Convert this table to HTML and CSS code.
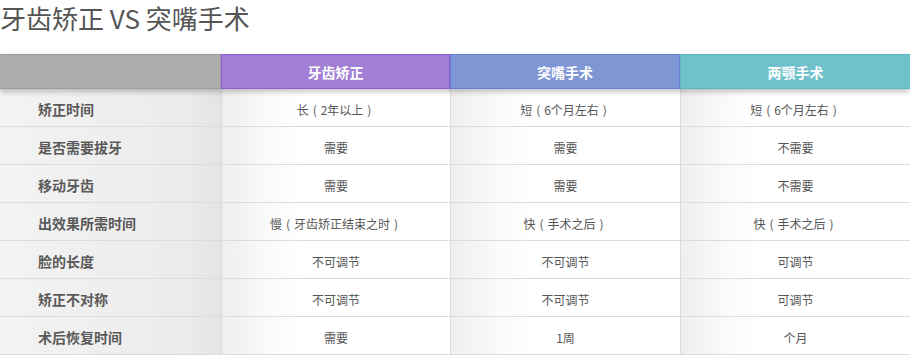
FILE: index.html
```html
<!DOCTYPE html>
<html lang="zh">
<head>
<meta charset="utf-8">
<link rel="stylesheet" href="styles.css">
</head>
<body>
<h1 class="title">牙齿矫正 VS 突嘴手术</h1>
<div class="table">
  <div class="head">
    <div class="hcell hblank"></div>
    <div class="hcell hpurple">牙齿矫正</div>
    <div class="hcell hblue">突嘴手术</div>
    <div class="hcell hteal">两颚手术</div>
  </div>
  <div class="row">
    <div class="label">矫正时间</div>
    <div class="cell">长<span class="p">(</span>2年以上<span class="p">)</span></div>
    <div class="cell">短<span class="p">(</span>6个月左右<span class="p">)</span></div>
    <div class="cell">短<span class="p">(</span>6个月左右<span class="p">)</span></div>
  </div>
  <div class="row">
    <div class="label">是否需要拔牙</div>
    <div class="cell">需要</div>
    <div class="cell">需要</div>
    <div class="cell">不需要</div>
  </div>
  <div class="row">
    <div class="label">移动牙齿</div>
    <div class="cell">需要</div>
    <div class="cell">需要</div>
    <div class="cell">不需要</div>
  </div>
  <div class="row">
    <div class="label">出效果所需时间</div>
    <div class="cell">慢<span class="p">(</span>牙齿矫正结束之时<span class="p">)</span></div>
    <div class="cell">快<span class="p">(</span>手术之后<span class="p">)</span></div>
    <div class="cell">快<span class="p">(</span>手术之后<span class="p">)</span></div>
  </div>
  <div class="row">
    <div class="label">脸的长度</div>
    <div class="cell">不可调节</div>
    <div class="cell">不可调节</div>
    <div class="cell">可调节</div>
  </div>
  <div class="row">
    <div class="label">矫正不对称</div>
    <div class="cell">不可调节</div>
    <div class="cell">不可调节</div>
    <div class="cell">可调节</div>
  </div>
  <div class="row">
    <div class="label">术后恢复时间</div>
    <div class="cell">需要</div>
    <div class="cell">1周</div>
    <div class="cell">个月</div>
  </div>
</div>
</body>
</html>
```

FILE: styles.css
```css
html, body {
  margin: 0;
  padding: 0;
  background: #fff;
  font-family: "Noto Sans CJK SC", "Noto Sans", sans-serif;
  color: #555;
}
.title {
  margin: 0;
  height: 54px;
  font-size: 26px;
  line-height: 36px;
  font-weight: normal;
  color: #555;
  letter-spacing: 0;
}
.table {
  width: 910px;
}
.head, .row {
  display: grid;
  grid-template-columns: 221px 229px 230px 230px;
}
.head {
  height: 35px;
  position: relative;
  z-index: 1;
  box-shadow: 0 3px 5px rgba(0, 0, 0, 0.22);
}
.hcell {
  box-sizing: border-box;
  display: flex;
  align-items: center;
  justify-content: center;
  color: #fff;
  font-size: 14px;
  font-weight: bold;
  border: 1px solid transparent;
}
.hblank {
  background: #adadad;
  border-color: #9d9d9d;
  border-left: 0;
}
.hpurple {
  background: #a17fd4;
  border-color: #8d5fd3;
}
.hblue {
  background: #7f96d5;
  border-color: #6a80d2;
}
.hteal {
  background: #6fc1cb;
  border-color: #5cb6c1;
  border-right: 0;
}
.row {
  height: 38px;
  box-sizing: border-box;
  border-bottom: 1px solid #dcdcdc;
}
.label {
  display: flex;
  align-items: center;
  padding-left: 38px;
  padding-top: 2px;
  font-size: 14px;
  font-weight: bold;
  color: #5a5a5a;
  background: linear-gradient(to right, #f3f3f3, #ebebeb 85%, #e3e3e3);
}
.cell {
  display: flex;
  align-items: center;
  justify-content: center;
  padding-top: 3px;
  font-size: 12px;
  color: #555;
  border-left: 1px solid #dcdcdc;
  background: linear-gradient(to right, #eeeeee, #fafafa 20%, #ffffff 35%);
}
.p {
  display: inline-block;
  width: 12px;
  text-align: center;
}
```
